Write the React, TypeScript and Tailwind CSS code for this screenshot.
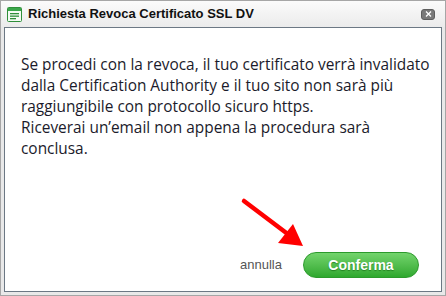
const WindowIcon = () => (
  <svg width="15" height="15" viewBox="0 0 15 15">
    <rect x="0.5" y="0.5" width="14" height="14" rx="1" fill="#f4fbf4" stroke="#2f8f3a" />
    <rect x="1" y="1" width="13" height="3" fill="#3aa64a" />
    <rect x="3" y="6" width="9" height="1.3" fill="#2f8f3a" />
    <rect x="3" y="8.5" width="9" height="1.3" fill="#2f8f3a" />
    <rect x="3" y="11" width="6" height="1.3" fill="#2f8f3a" />
  </svg>
);

const RedArrow = () => (
  <svg className="absolute left-[236px] top-[192px]" width="72" height="60" viewBox="0 0 72 60">
    <line x1="7" y1="8" x2="56" y2="45" stroke="#ff0000" strokeWidth="4.5" strokeLinecap="round" />
    <polygon points="66,53 56,31 41,50" fill="#ff0000" />
  </svg>
);

export default function App() {
  return (
    <div className="relative w-[446px] h-[296px] border border-[#a6a6a6] bg-[#e9e9e9] flex flex-col" style={{ fontFamily: '"Open Sans", "Noto Sans", sans-serif' }}>
      <div className="h-[26px] flex items-center pl-[6px] pr-[10px] bg-gradient-to-b from-[#fbfbfb] to-[#ebebeb]">
        <WindowIcon />
        <span className="ml-[6px] text-[13px] font-bold text-[#111]" style={{ fontFamily: '"Liberation Sans", Arial, sans-serif' }}>
          Richiesta Revoca Certificato SSL DV
        </span>
        <button className="ml-auto w-[14px] h-[11px] rounded-[3px] bg-[#7a7a7a] border border-[#5e5e5e] flex items-center justify-center">
          <svg width="7" height="6" viewBox="0 0 7 6">
            <path d="M1 0.5 L6 5.5 M6 0.5 L1 5.5" stroke="#fff" strokeWidth="1.3" />
          </svg>
        </button>
      </div>
      <div className="flex-1 mx-[3px] mb-[3px] border border-[#6c7884] bg-white flex flex-col">
        <p className="pl-[16px] pr-[4px] pt-[26px] text-[15.4px] leading-[21px] text-[#1b1b2b]">
          Se procedi con la revoca, il tuo certificato verrà invalidato dalla Certification Authority e il tuo sito non sarà più raggiungibile con protocollo sicuro https.
          <br />
          Riceverai un’email non appena la procedura sarà conclusa.
        </p>
        <div className="mt-auto flex items-center justify-end gap-[21px] pr-[22px] pb-[13px]">
          <span className="text-[13px] text-[#555]" style={{ fontFamily: '"Liberation Sans", Arial, sans-serif' }}>annulla</span>
          <button className="w-[116px] h-[26px] rounded-full border border-[#2c9a2c] bg-gradient-to-b from-[#72d46c] to-[#2ea82e] text-white text-[14px] font-bold" style={{ fontFamily: '"Liberation Sans", Arial, sans-serif', textShadow: '0 1px 1px rgba(0,80,0,0.5)' }}>
            Conferma
          </button>
        </div>
      </div>
      <RedArrow />
    </div>
  );
}
